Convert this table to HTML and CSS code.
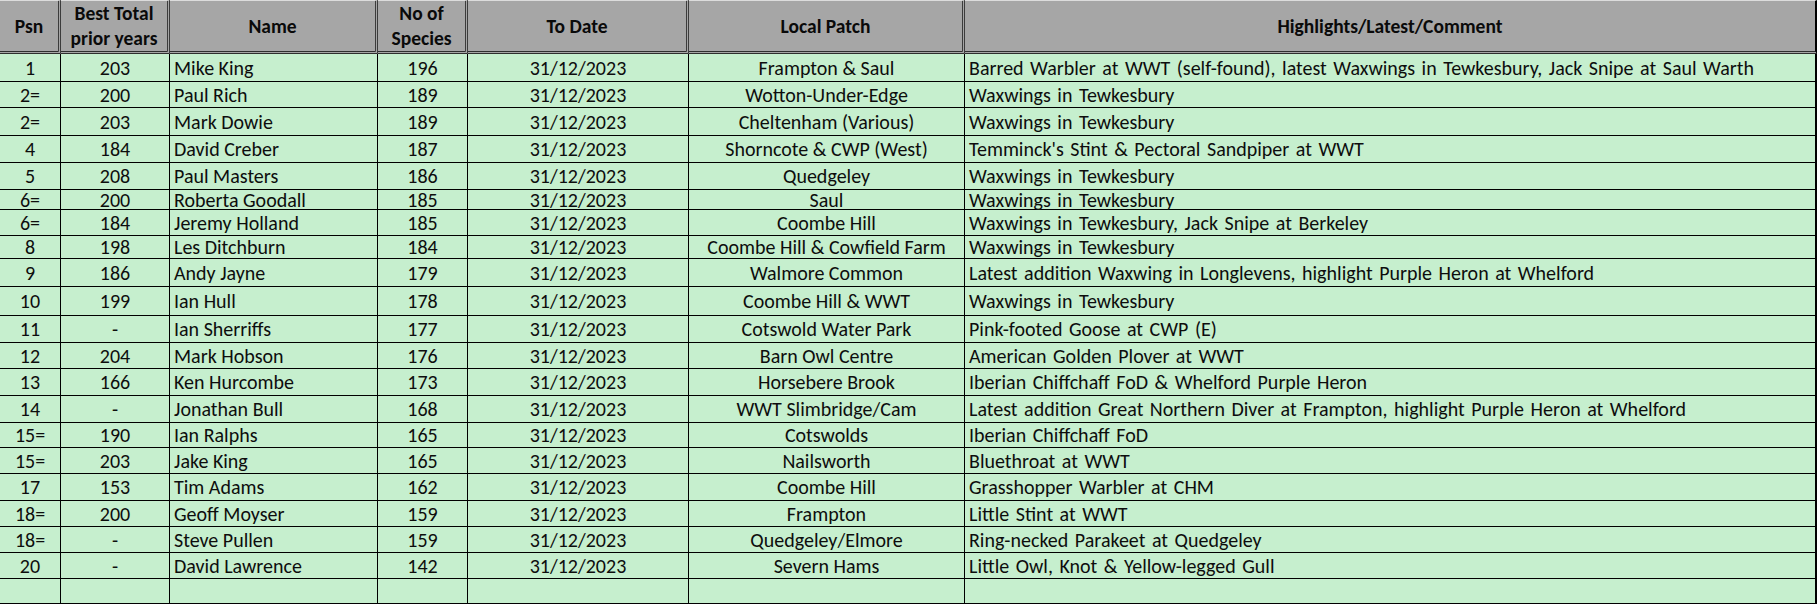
FILE: index.html
```html
<!DOCTYPE html>
<html lang="en">
<head>
<meta charset="utf-8">
<title>Bird list</title>
<link rel="stylesheet" href="styles.css">
</head>
<body>
<table class="sheet">
  <colgroup>
    <col class="c-psn"><col class="c-best"><col class="c-name"><col class="c-spec"><col class="c-date"><col class="c-patch"><col class="c-comment">
  </colgroup>
  <thead>
    <tr class="head">
      <th>Psn</th>
      <th class="two">Best Total<br>prior years</th>
      <th>Name</th>
      <th class="two">No of<br>Species</th>
      <th>To Date</th>
      <th>Local Patch</th>
      <th>Highlights/Latest/Comment</th>
    </tr>
  </thead>
  <tbody>
    <tr class="h28"><td>1</td><td>203</td><td class="l">Mike King</td><td>196</td><td>31/12/2023</td><td>Frampton &amp; Saul</td><td class="l c">Barred Warbler at WWT (self-found), latest Waxwings in Tewkesbury, Jack Snipe at Saul Warth</td></tr>
    <tr class="h26"><td>2=</td><td>200</td><td class="l">Paul Rich</td><td>189</td><td>31/12/2023</td><td>Wotton-Under-Edge</td><td class="l c">Waxwings in Tewkesbury</td></tr>
    <tr class="h28"><td>2=</td><td>203</td><td class="l">Mark Dowie</td><td>189</td><td>31/12/2023</td><td>Cheltenham (Various)</td><td class="l c">Waxwings in Tewkesbury</td></tr>
    <tr class="h27"><td>4</td><td>184</td><td class="l">David Creber</td><td>187</td><td>31/12/2023</td><td>Shorncote &amp; CWP (West)</td><td class="l c">Temminck's Stint &amp; Pectoral Sandpiper at WWT</td></tr>
    <tr class="h27"><td>5</td><td>208</td><td class="l">Paul Masters</td><td>186</td><td>31/12/2023</td><td>Quedgeley</td><td class="l c">Waxwings in Tewkesbury</td></tr>
    <tr class="h20"><td>6=</td><td>200</td><td class="l">Roberta Goodall</td><td>185</td><td>31/12/2023</td><td>Saul</td><td class="l c">Waxwings in Tewkesbury</td></tr>
    <tr class="h26"><td>6=</td><td>184</td><td class="l">Jeremy Holland</td><td>185</td><td>31/12/2023</td><td>Coombe Hill</td><td class="l c">Waxwings in Tewkesbury, Jack Snipe at Berkeley</td></tr>
    <tr class="h23"><td>8</td><td>198</td><td class="l">Les Ditchburn</td><td>184</td><td>31/12/2023</td><td>Coombe Hill &amp; Cowfield Farm</td><td class="l c">Waxwings in Tewkesbury</td></tr>
    <tr class="h28"><td>9</td><td>186</td><td class="l">Andy Jayne</td><td>179</td><td>31/12/2023</td><td>Walmore Common</td><td class="l c">Latest addition Waxwing in Longlevens, highlight Purple Heron at Whelford</td></tr>
    <tr class="h29"><td>10</td><td>199</td><td class="l">Ian Hull</td><td>178</td><td>31/12/2023</td><td>Coombe Hill &amp; WWT</td><td class="l c">Waxwings in Tewkesbury</td></tr>
    <tr class="h27"><td>11</td><td>-</td><td class="l">Ian Sherriffs</td><td>177</td><td>31/12/2023</td><td>Cotswold Water Park</td><td class="l c">Pink-footed Goose at CWP (E)</td></tr>
    <tr class="h26"><td>12</td><td>204</td><td class="l">Mark Hobson</td><td>176</td><td>31/12/2023</td><td>Barn Owl Centre</td><td class="l c">American Golden Plover at WWT</td></tr>
    <tr class="h27"><td>13</td><td>166</td><td class="l">Ken Hurcombe</td><td>173</td><td>31/12/2023</td><td>Horsebere Brook</td><td class="l c">Iberian Chiffchaff FoD &amp; Whelford Purple Heron</td></tr>
    <tr class="h27"><td>14</td><td>-</td><td class="l">Jonathan Bull</td><td>168</td><td>31/12/2023</td><td>WWT Slimbridge/Cam</td><td class="l c">Latest addition Great Northern Diver at Frampton, highlight Purple Heron at Whelford</td></tr>
    <tr class="h25"><td>15=</td><td>190</td><td class="l">Ian Ralphs</td><td>165</td><td>31/12/2023</td><td>Cotswolds</td><td class="l c">Iberian Chiffchaff FoD</td></tr>
    <tr class="h26"><td>15=</td><td>203</td><td class="l">Jake King</td><td>165</td><td>31/12/2023</td><td>Nailsworth</td><td class="l c">Bluethroat at WWT</td></tr>
    <tr class="h27"><td>17</td><td>153</td><td class="l">Tim Adams</td><td>162</td><td>31/12/2023</td><td>Coombe Hill</td><td class="l c">Grasshopper Warbler at CHM</td></tr>
    <tr class="h26"><td>18=</td><td>200</td><td class="l">Geoff Moyser</td><td>159</td><td>31/12/2023</td><td>Frampton</td><td class="l c">Little Stint at WWT</td></tr>
    <tr class="h26"><td>18=</td><td>-</td><td class="l">Steve Pullen</td><td>159</td><td>31/12/2023</td><td>Quedgeley/Elmore</td><td class="l c">Ring-necked Parakeet at Quedgeley</td></tr>
    <tr class="h26"><td>20</td><td>-</td><td class="l">David Lawrence</td><td>142</td><td>31/12/2023</td><td>Severn Hams</td><td class="l c">Little Owl, Knot &amp; Yellow-legged Gull</td></tr>
    <tr class="h25"><td></td><td></td><td class="l"></td><td></td><td></td><td></td><td class="l c"></td></tr>
  </tbody>
</table>
</body>
</html>
```

FILE: styles.css
```css
html, body {
  margin: 0;
  padding: 0;
  background: #ffffff;
}

.sheet {
  width: 1817px;
  table-layout: fixed;
  border-collapse: separate;
  border-spacing: 0;
  font-family: "Carlito", "Lato", "Liberation Sans", sans-serif;
  font-size: 20px;
  color: #0d0d0d;
}

.c-psn { width: 61px; }
.c-best { width: 109px; }
.c-name { width: 208px; }
.c-spec { width: 90px; }
.c-date { width: 221px; }
.c-patch { width: 276px; }
.c-comment { width: 852px; }

.sheet th,
.sheet td {
  box-sizing: border-box;
  padding: 0 4px;
  white-space: nowrap;
  vertical-align: middle;
  text-align: center;
}

.head th {
  height: 53px;
  background: #a6a6a6;
  font-weight: 700;
  font-size: 19.5px;
  line-height: 20px;
  color: #0a0a0a;
  border-top: 1px solid #dcdcdc;
  border-right: 3px double #3c3c3c;
  border-bottom: 3px double #2e2e2e;
}

.head th.two {
  line-height: 25px;
}

.head th:last-child {
  border-right: 2px solid #000;
}

.sheet td {
  background: #c6efce;
  border-right: 1px solid #000;
  border-bottom: 1px solid #000;
  line-height: 18px;
}

.sheet td:last-child {
  border-right: 2px solid #000;
}

.sheet td.l {
  text-align: left;
}

.sheet td.c {
  word-spacing: 2px;
}

.h20 { height: 20px; }
.h23 { height: 23px; }
.h25 { height: 25px; }
.h26 { height: 26px; }
.h27 { height: 27px; }
.h28 { height: 28px; }
.h29 { height: 29px; }
```
